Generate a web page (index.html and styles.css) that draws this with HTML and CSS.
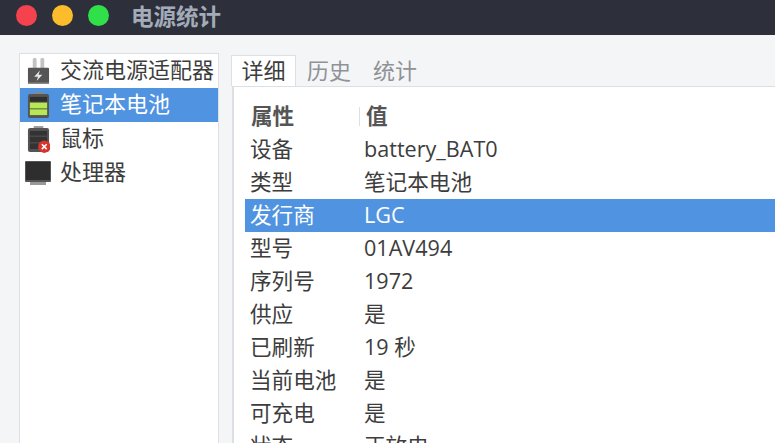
FILE: index.html
```html
<!DOCTYPE html>
<html lang="zh">
<head>
<meta charset="utf-8">
<title>电源统计</title>
<link rel="stylesheet" href="styles.css">
</head>
<body>
<div class="window">
  <header class="titlebar">
    <span class="dot red"></span><span class="dot yellow"></span><span class="dot green"></span>
    <span class="title">电源统计</span>
  </header>
  <main class="content">
    <ul class="devices">
      <li class="device">
        <svg class="ico" viewBox="0 0 24 28"><path d="M6 1.500a1.500 1.500 0 0 1 1.500-1.500h1a1.500 1.500 0 0 1 1.500 1.500V11H6zM14 1.500a1.500 1.500 0 0 1 1.500-1.500h1a1.500 1.500 0 0 1 1.500 1.500V11h-4z" fill="#c3c3c3"/><rect x="1" y="10" width="22" height="17" rx="1" fill="#555"/><path d="M1 25.500h22V27H1z" fill="#8a8a8a"/><path d="M13.500 13l-6 6.500h4l-1.500 4.500 6-6.500h-4z" fill="#e8e8e8"/></svg>
        <span>交流电源适配器</span>
      </li>
      <li class="device selected">
        <svg class="ico" viewBox="0 0 24 28"><rect x="7" y="0" width="10" height="3" fill="#888"/><rect x="1" y="2" width="22" height="25" rx="2" fill="#555"/><rect x="3" y="5" width="18" height="5" fill="#2f2f2f"/><rect x="3" y="11" width="18" height="6" fill="#b5e853"/><rect x="3" y="18" width="18" height="6" fill="#b5e853"/></svg>
        <span>笔记本电池</span>
      </li>
      <li class="device">
        <svg class="ico" viewBox="0 0 24 28"><rect x="7" y="0" width="10" height="3" fill="#999"/><rect x="1" y="2" width="22" height="25" rx="2" fill="#555"/><rect x="3" y="5" width="18" height="5" fill="#333"/><rect x="3" y="11" width="18" height="6" fill="#333"/><rect x="3" y="18" width="18" height="6" fill="#333"/><circle cx="18" cy="21.500" r="6.500" fill="#d9342b"/><path d="M15.500 19l5 5m0-5l-5 5" stroke="#fff" stroke-width="1.600"/></svg>
        <span>鼠标</span>
      </li>
      <li class="device">
        <svg class="ico cpu" viewBox="0 0 26 24"><rect x="5" y="20" width="16" height="4" fill="#999"/><rect x="0" y="0" width="26" height="21" rx="1" fill="#555"/><rect x="1" y="1" width="24" height="18" fill="#2e2e2e"/></svg>
        <span>处理器</span>
      </li>
    </ul>
    <section class="details">
      <nav class="tabs">
        <span class="tab active">详细</span>
        <span class="tab">历史</span>
        <span class="tab">统计</span>
      </nav>
      <div class="panel">
        <div class="row head"><span class="key">属性</span><span class="val">值</span></div>
        <div class="row"><span class="key">设备</span><span class="val">battery_BAT0</span></div>
        <div class="row"><span class="key">类型</span><span class="val">笔记本电池</span></div>
        <div class="row selected"><span class="key">发行商</span><span class="val">LGC</span></div>
        <div class="row"><span class="key">型号</span><span class="val">01AV494</span></div>
        <div class="row"><span class="key">序列号</span><span class="val">1972</span></div>
        <div class="row"><span class="key">供应</span><span class="val">是</span></div>
        <div class="row"><span class="key">已刷新</span><span class="val">19 秒</span></div>
        <div class="row"><span class="key">当前电池</span><span class="val">是</span></div>
        <div class="row"><span class="key">可充电</span><span class="val">是</span></div>
        <div class="row"><span class="key">状态</span><span class="val">正放电</span></div>
      </div>
    </section>
  </main>
</div>
</body>
</html>
```
FILE: styles.css
```css
* { box-sizing: border-box; }
html, body { margin: 0; height: 100%; overflow: hidden; }
body {
  font-family: "Open Sans", "Noto Sans CJK SC", sans-serif;
  font-size: 22px;
  color: #3d3d3d;
  background: #f4f5f7;
}
.window { height: 443px; overflow: hidden; display: flex; flex-direction: column; }
.titlebar {
  height: 35px;
  flex: none;
  background: #2d303b;
  display: flex;
  align-items: flex-start;
  padding: 5px 0 0 16px;
  gap: 15px;
}
.dot { width: 21px; height: 21px; border-radius: 50%; }
.red { background: #f5424f; }
.yellow { background: #fdbc2c; }
.green { background: #2fe048; }
.title {
  margin: -4px 0 0 7px;
  font-family: "Noto Sans CJK SC", sans-serif;
  font-size: 22.500px;
  font-weight: 700;
  line-height: 28px;
  color: #a3abb8;
}
.content { flex: 1; display: flex; padding: 18px 0 0 19px; gap: 12px; min-height: 0; }
.devices {
  list-style: none;
  margin: 0;
  padding: 0;
  width: 200px;
  flex: none;
  background: #fff;
  border: 1px solid #dcdfe3;
  border-bottom: 0;
}
.device {
  height: 34px;
  display: flex;
  align-items: center;
  gap: 10px;
  padding-left: 7px;
  white-space: nowrap;
}
.device span { line-height: 28px; height: 28px; margin-top: -4px; }
.device:last-child span { margin-left: -3px; }
.device.selected, .row.selected { background: #5093e0; color: #fff; }
.ico { width: 23px; height: 27px; flex: none; }
.ico.cpu { width: 26px; height: 24px; margin: 0 2px 0 -2px; }
.details { flex: 1; min-width: 0; display: flex; flex-direction: column; }
.tabs { display: flex; height: 33px; padding-top: 2px; flex: none; }
.tab { width: 66px; text-align: center; line-height: 30px; color: #8f9296; }
.tab.active {
  width: 65px;
  background: #fff;
  color: #3d3d3d;
  border: 1px solid #dcdfe3;
  border-bottom: 0;
  line-height: 29px;
}
.panel {
  flex: 1;
  background: #fff;
  border-top: 1px solid #dcdfe3;
  border-left: 2px solid #dcdfe3;
  padding: 13px 0 0 11px;
  margin-left: 1px;
  font-size: 21.600px;
}
.row { display: flex; height: 33px; line-height: 31px; padding-left: 5px; white-space: nowrap; }
.key { width: 115px; flex: none; }
.row .val { margin-left: -1px; }
.head { font-weight: 700; color: #555; font-family: "Noto Sans CJK SC", sans-serif; line-height: 29px; }
.head .key { padding-left: 1px; }
.head .val { position: relative; padding-left: 2px; }
.head .val::before {
  content: "";
  position: absolute;
  left: -5px;
  top: 7px;
  height: 19px;
  width: 1px;
  background: #dcdfe3;
}
```
